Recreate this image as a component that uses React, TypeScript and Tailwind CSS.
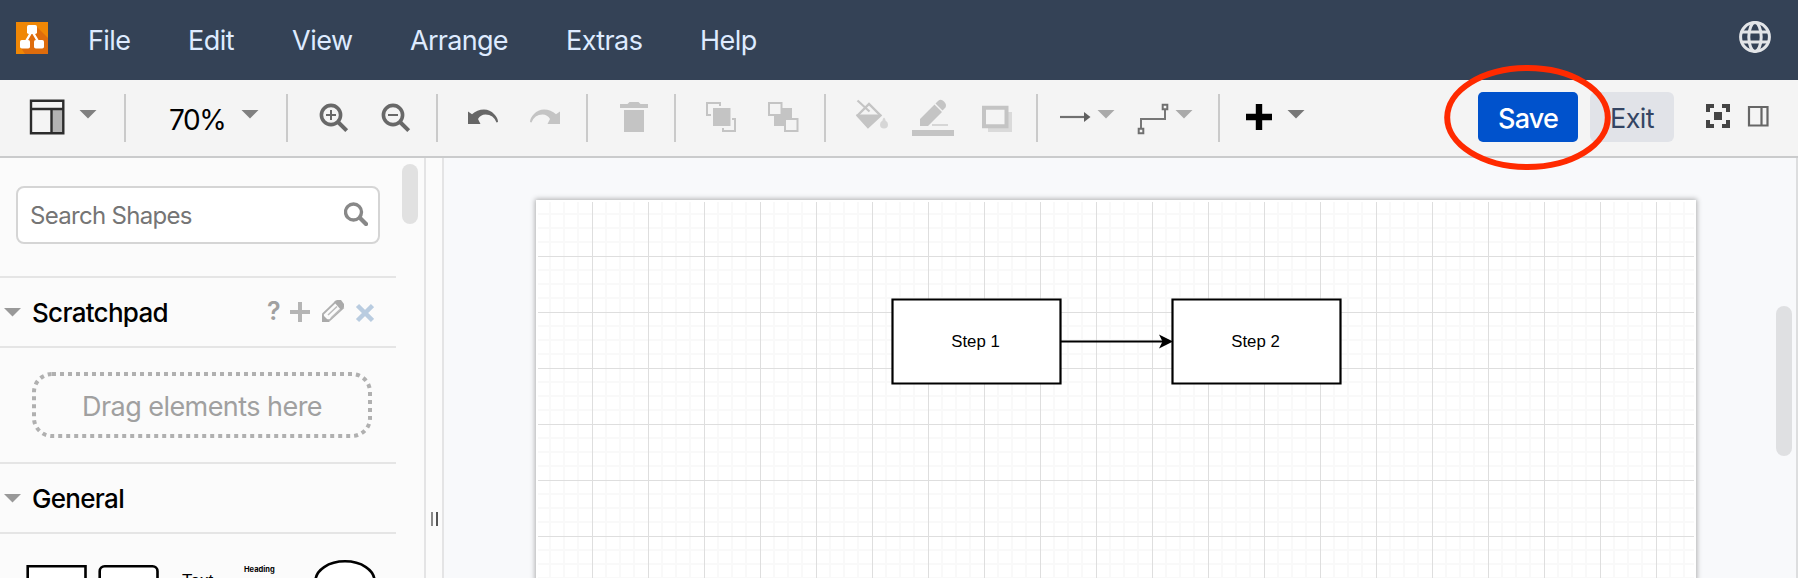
import type { ReactNode } from 'react';

const ICON = '#c4c4c4';

/** Drawing slot of the toolbar: x is the left edge of the slot in toolbar units. */
function Tool({ x, w, label, children }: { x: number; w: number; label: string; children: ReactNode }) {
  return (
    <button type="button" aria-label={label} className="block h-19 shrink-0">
      <svg width={w} height={76} viewBox={`${x} 80 ${w} 76`} fill="none" className="block">
        {children}
      </svg>
    </button>
  );
}

function Caret({ x, y = 110, fill = '#808080' }: { x: number; y?: number; fill?: string }) {
  return <path d={`M${x} ${y}h17l-8.5 8.5z`} fill={fill} />;
}

function Separator() {
  return <div className="mt-3.5 h-12 w-0.5 shrink-0 bg-[#cacaca]" />;
}

function Magnifier({ cx, plus }: { cx: number; plus?: boolean }) {
  return (
    <g stroke="#686868">
      <circle cx={cx} cy={115} r={9.6} strokeWidth={3.6} />
      <path d={`M${cx + 7} 122l8.7 8.7`} strokeWidth={4} />
      <path d={`M${cx - 5} 115h10`} strokeWidth={2} />
      {plus && <path d={`M${cx} 110v10`} strokeWidth={2} />}
    </g>
  );
}

function MenuBar() {
  return (
    <header className="flex h-20 shrink-0 bg-[#344256] text-[27px] leading-[72px] text-[#deebff]">
      <svg className="mt-[22px] ml-4 shrink-0" width={32} height={32} viewBox="0 0 32 32">
        <rect width={32} height={32} fill="#f08705" />
        <path d="M20 4l12 12v16H9l-4-6 8-11z" fill="#df6c0c" />
        <path d="M16 9L9 21M16 9l7 12" stroke="#fff" strokeWidth={2.4} />
        <rect x={11} y={3} width={10} height={9} rx={1.8} fill="#fff" />
        <rect x={4} y={18} width={10} height={8.5} rx={1.8} fill="#fff" />
        <rect x={18} y={18} width={10} height={8.5} rx={1.8} fill="#fff" />
      </svg>
      <nav className="flex pt-[5px] pl-[40px] whitespace-nowrap">
        <span className="w-[100px] tracking-[-0.6px]">File</span>
        <span className="w-[104px] tracking-[-0.5px]">Edit</span>
        <span className="w-[118px] tracking-[-0.5px]">View</span>
        <span className="w-[156px] tracking-[-0.7px]">Arrange</span>
        <span className="w-[134px] tracking-[-0.6px]">Extras</span>
        <span className="tracking-[-0.5px]">Help</span>
      </nav>
      <svg className="mt-[21px] mr-[27px] ml-auto" width={32} height={32} viewBox="0 0 32 32" fill="none" stroke="#e3e5e8" strokeWidth={3}>
        <circle cx={16} cy={16} r={14.4} />
        <ellipse cx={16} cy={16} rx={6.2} ry={14.4} />
        <path d="M3 11h26M3 21h26" />
      </svg>
    </header>
  );
}

function Toolbar() {
  return (
    <div className="flex h-[78px] shrink-0 border-b-2 border-[#cacbcc] bg-[#f4f4f4]">
      <Tool x={0} w={124} label="View">
        <path d="M51.5 109h12v24h-12z" fill="#b3b3b3" />
        <path d="M31 100.800h32.300v32.400H31zM31 109h32.300M51.500 109v24" stroke="#2c2c2c" strokeWidth={2.400} />
        <Caret x={79.5} />
      </Tool>
      <Separator />
      <button type="button" className="flex w-40 pl-[43px] text-[28px] leading-[80px] tracking-[-1.4px] text-black">
        <span className="w-[72px] text-left">70%</span>
        <svg className="mt-[30px]" width={18} height={9} viewBox="0 0 18 9">
          <path d="M.5 0h17L9 8.5z" fill="#808080" />
        </svg>
      </button>
      <Separator />
      <Tool x={288} w={74} label="Zoom in"><Magnifier cx={331} plus /></Tool>
      <Tool x={362} w={74} label="Zoom out"><Magnifier cx={393} /></Tool>
      <Separator />
      <Tool x={438} w={74} label="Undo">
        <path d="M468 111.500l4 2.800Q477 109.500 484 109.500q6 0 10 4.500q4 4 4 8l-1.500.5q-3-8-11-8q-5 0-7.500 4.500l2.500 5h-12.500z" fill="#666" />
      </Tool>
      <Tool x={512} w={74} label="Redo">
        <path d="M560 111.500l-4 2.800Q551 109.500 544 109.500q-6 0-10 4.500q-4 4-4 8l1.500.5q3-8 11-8q5 0 7.500 4.500l-2.500 5h12.500z" fill={ICON} />
      </Tool>
      <Separator />
      <Tool x={588} w={86} label="Delete">
        <path d="M620 104h7.500l2-2h9l2 2h7.500v4h-28zM624 110h20v22h-20z" fill={ICON} />
      </Tool>
      <Separator />
      <Tool x={676} w={74} label="To front">
        <path d="M713 108h17.500v18H713z" fill={ICON} />
        <path d="M720 106v-3h-13v12h4M732 119h3v12h-12v-3" stroke={ICON} strokeWidth={2} />
      </Tool>
      <Tool x={750} w={74} label="To back">
        <path d="M774 108h18v18h-18z" fill={ICON} />
        <path d="M769 103h12.500v12H769zM785 119h12.500v12H785z" fill="#f4f4f4" stroke={ICON} strokeWidth={2} />
      </Tool>
      <Separator />
      <Tool x={826} w={74} label="Fill color">
        <path d="M857.500 115.500L869 104l11.500 11.500L868 127z" stroke={ICON} strokeWidth={2.400} />
        <path d="M856 114.500h25.500L868 128z" fill={ICON} />
        <path d="M857.500 100.500l12 11" stroke={ICON} strokeWidth={2.200} />
        <path d="M884 117.500q1.500 1 1.500 3q2.500 1.500 2.500 4a4 4 0 0 1-8 0q0-2.500 2.500-4q0-2 1.500-3z" fill="#d6d6d6" />
      </Tool>
      <Tool x={900} w={68} label="Line color">
        <path d="M920 126v-7l14.500-14.500 7.500 7.500-14 14zM935.500 103.500l2.500-2.500q3-2.500 6 .5t1.500 6L942.500 110.500z" fill={ICON} />
        <path d="M932 125h16" stroke="#d6d6d6" strokeWidth={2} />
        <path d="M912 130h42v6h-42z" fill={ICON} />
      </Tool>
      <Tool x={968} w={68} label="Shadow">
        <path d="M988 112h24v20h-24z" fill="#dadada" />
        <path d="M984 107.700h22.500v18.500H984z" fill="#f4f4f4" stroke={ICON} strokeWidth={4} />
      </Tool>
      <Separator />
      <Tool x={1038} w={84} label="Connection">
        <path d="M1060 117h26" stroke="#707070" strokeWidth={2.200} />
        <path d="M1084 112l6.500 5-6.500 5z" fill="#606060" />
        <Caret x={1097.500} fill="#aaa" />
      </Tool>
      <Tool x={1122} w={96} label="Waypoints">
        <path d="M1141 128v-9h24v-9" stroke="#777" strokeWidth={2} />
        <path d="M1138.700 128.700h4.600v4.600h-4.600zM1162.700 104.700h4.600v4.600h-4.600z" stroke="#707070" strokeWidth={2} />
        <Caret x={1175.500} fill="#aaa" />
      </Tool>
      <Separator />
      <Tool x={1220} w={100} label="Insert">
        <path d="M1246 117h26M1259 104v26" stroke="#000" strokeWidth={6.400} />
        <Caret x={1287.500} fill="#777" />
      </Tool>
      <div className="ml-auto flex">
        <div className="relative mt-3 h-[50px]">
          <button type="button" className="h-[50px] w-[100px] rounded-[5px] bg-[#0052cc] text-[27px] leading-[54px] font-medium tracking-[-0.8px] text-white">
            Save
          </button>
          <svg className="absolute -top-7 -left-[35px] z-10 max-w-none" width={170} height={108} viewBox="0 0 170 108">
            <ellipse cx={84.500} cy={53.500} rx={80.300} ry={49.500} fill="none" stroke="#ff2a00" strokeWidth={6} />
          </svg>
        </div>
        <button type="button" className="mt-3 ml-3 h-[50px] w-21 rounded-[6px] bg-[#e1e3e8] text-[27px] leading-[54px] tracking-[-0.6px] text-[#344563]">
          Exit
        </button>
        <Tool x={1674} w={66} label="Fullscreen">
          <path d="M1708 112v-6h6M1722 106h6v6M1728 120v6h-6M1714 126h-6v-6" stroke="#444" strokeWidth={4} />
          <path d="M1714 112h8v8h-8z" fill="#444" />
        </Tool>
        <Tool x={1740} w={58} label="Format panel">
          <path d="M1749 107h18.500v18.500H1749zM1761.500 107v18" stroke="#666" strokeWidth={2.200} />
        </Tool>
      </div>
    </div>
  );
}

function SectionTitle({ title, children }: { title: string; children?: ReactNode }) {
  return (
    <div className="flex h-[72px] w-[396px] items-center border-y-2 border-[#e5e5e5]">
      <svg className="ml-[3.5px] w-[17px] shrink-0" height={9} viewBox="0 0 17 9">
        <path d="M0 0h17L8.500 8.500z" fill="#999" />
      </svg>
      <span className="ml-[11.5px] text-[26px] font-medium tracking-[-0.7px] text-black">{title}</span>
      {children}
    </div>
  );
}

function Sidebar() {
  return (
    <aside className="relative w-[424px] shrink-0 overflow-hidden bg-[#fbfbfb]">
      <div className="mt-7 ml-4 flex h-[58px] w-[364px] justify-between rounded-lg border-2 border-[#d5d5d5] bg-white pl-3">
        <span className="text-[24px] leading-[56px] tracking-[-0.7px] text-[#757575]">Search Shapes</span>
        <svg className="mt-3.5 mr-2.5" width={24} height={24} viewBox="0 0 24 24" fill="none" stroke="#888">
          <circle cx={9.500} cy={10} r={8} strokeWidth={3.400} />
          <path d="M15.500 15.500l8 8" strokeWidth={4.200} />
        </svg>
      </div>
      <div className="mt-8">
        <SectionTitle title="Scratchpad">
          <span className="mr-[7px] ml-auto w-[15px] text-[25px] font-semibold text-[#a0a0a0]">?</span>
          <svg className="mr-[22px] shrink-0" width={85} height={24} viewBox="289 300 85 24" fill="none">
            <path d="M290 312h20M300 302v20" stroke="#b5b5b5" strokeWidth={4} />
            <path d="M323 321v-7l13-12.500 7 6.500-13 12z" stroke="#b0b0b0" strokeWidth={1.800} />
            <path d="M322 322v-8l8 8zM334 302l3-2h4l3 4v3l-3 3z" fill="#aaa" />
            <path d="M328 315l9-8.500M331 318l9-8.500" stroke="#bbb" strokeWidth={1.500} />
            <path d="M357.500 305.500l15 15M372.500 305.500l-15 15" stroke="#b9cce0" strokeWidth={4.500} />
          </svg>
        </SectionTitle>
      </div>
      <div className="relative mt-6 ml-8 h-[66px] w-[340px] text-center">
        <svg className="absolute inset-0" width={340} height={66} viewBox="0 0 340 66">
          <rect x={2} y={2} width={336} height={62} rx={18} fill="none" stroke="#b0b0b0" strokeWidth={4} strokeDasharray="4 4" />
        </svg>
        <span className="text-[27px] leading-[69px] tracking-[-0.55px] text-[#a0a0a0]">Drag elements here</span>
      </div>
      <div className="mt-6">
        <SectionTitle title="General" />
      </div>
      <div className="mt-6 flex h-5">
        <svg className="shrink-0" width={170} height={20} viewBox="0 558 170 20" fill="#fff" stroke="#000" strokeWidth={2.600}>
          <path d="M27.700 566.300h57.800v42H27.700z" />
          <rect x={99.700} y={566.300} width={57.800} height={42} rx={5} />
        </svg>
        <span className="mt-[11px] ml-3 w-[62px] font-['Liberation_Sans'] text-[17px] leading-6 text-black">Text</span>
        <span className="mt-[6px] w-[68px] font-['Inter'] text-[7.5px] leading-3 font-bold text-black">Heading</span>
        <svg className="shrink-0" width={66} height={20} viewBox="312 558 66 20" fill="#fff" stroke="#000" strokeWidth={2.600}>
          <ellipse cx={345} cy={581} rx={29.500} ry={19.700} />
        </svg>
      </div>
      <div className="absolute top-1.5 left-[402px] h-15 w-4 rounded-full bg-[#e1e1e1]" />
    </aside>
  );
}

function Node({ className, children }: { className: string; children: ReactNode }) {
  return (
    <div className={`absolute flex h-[84px] w-[168px] items-center justify-center font-['Liberation_Sans'] text-[16.8px] text-black ${className}`}>
      {children}
    </div>
  );
}

function Canvas() {
  return (
    <main className="relative flex-1 overflow-hidden border-r-2 border-[#dddedf] bg-[#f8f9fb]">
      <div className="absolute top-[42px] left-[92px] h-[500px] w-[1160px] bg-white shadow-[0_0_5px_1px_rgba(0,0,0,0.3)]">
        <svg className="block" width={1160} height={378} viewBox="536 200 1160 378" fill="none">
          <defs>
            <pattern id="grid" x={591} y={255} width={56} height={56} patternUnits="userSpaceOnUse">
              <path d="M14 0h2v56h-2zM28 0h2v56h-2zM42 0h2v56h-2zM0 14h56v2H0zM0 28h56v2H0zM0 42h56v2H0z" fill="#f9f9f9" />
              <path d="M1 0h1v56H1zM0 1h56v1H0z" fill="#dedede" />
            </pattern>
          </defs>
          <rect x={538} y={202} width={1156} height={376} fill="url(#grid)" />
          <g stroke="#000" strokeWidth={2.200}>
            <path d="M892.500 299.500h168v84h-168zM1172.500 299.500h168v84h-168z" fill="#fff" />
            <path d="M1060.500 341.500H1164" />
          </g>
          <path d="M1173 341.500l-14 7 3.500-7-3.500-7z" fill="#000" />
        </svg>
        <Node className="top-[99.5px] left-[355.5px]">Step 1</Node>
        <Node className="top-[99.5px] left-[635.5px]">Step 2</Node>
      </div>
      <div className="absolute top-[148px] right-1 h-[150px] w-4 rounded-full bg-[#dfe0e2]" />
    </main>
  );
}

export default function App() {
  return (
    <div className="flex h-[578px] w-[1798px] flex-col overflow-hidden font-['Inter',sans-serif]">
      <MenuBar />
      <Toolbar />
      <div className="flex min-h-0 flex-1">
        <Sidebar />
        <div className="flex w-5 shrink-0 items-start justify-center gap-[3px] border-x-2 border-[#e4e4e5] bg-[#fbfbfb] pt-[354px]">
          <div className="h-3.5 w-0.5 bg-[#888]" />
          <div className="h-3.5 w-0.5 bg-[#555]" />
        </div>
        <Canvas />
      </div>
    </div>
  );
}
